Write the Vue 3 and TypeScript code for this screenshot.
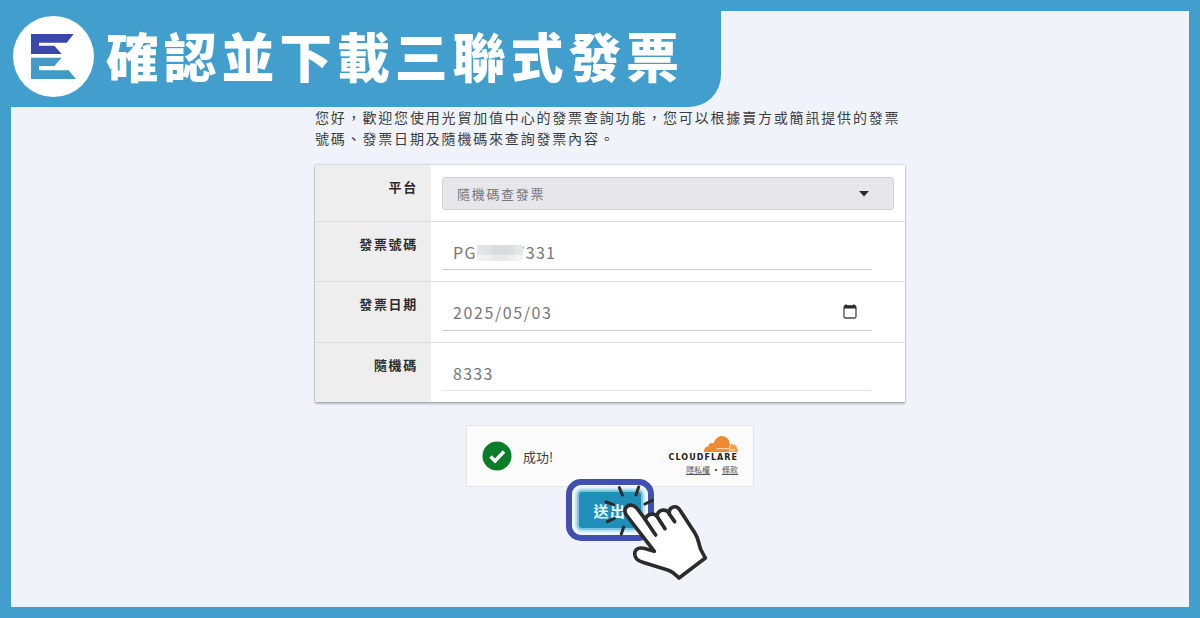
<script setup lang="ts">
import { ref } from 'vue'

const platform = ref('random-code')
const invoiceNumber = ref('PG        7331')
const invoiceDate = ref('2025/05/03')
const randomCode = ref('8333')

const maskTiles: string[] = [
  '#e2e4e6', '#dfe2e4', '#d9dde0', '#d8dcde', '#dddfe1', '#e6e8e8',
  '#f0f0f0', '#eeefef', '#e9eaeb', '#e6e8ea', '#efefef', '#f4f4f4',
]
</script>

<template>
  <div class="page">
    <header class="banner">
      <svg class="logo" viewBox="0 0 81 81" aria-hidden="true">
        <circle cx="40.5" cy="40.5" r="40.5" fill="#fff" />
        <path d="M18 18H60.7L53.7 26.8H26V29.8H41.3L48.7 38H18Z" fill="#3a47ab" />
        <path d="M18 41.7H48.7L41.3 50H26V54.3H55.7L63 63H18Z" fill="#3f9cc9" />
      </svg>
      <h1 class="title">確認並下載三聯式發票</h1>
    </header>

    <main class="content">
      <p class="intro">您好，歡迎您使用光貿加值中心的發票查詢功能，您可以根據賣方或簡訊提供的發票號碼、發票日期及隨機碼來查詢發票內容。</p>

      <form class="form" @submit.prevent>
        <div class="card">
          <div class="row">
            <label class="label" for="platform">平台</label>
            <div class="cell">
              <div class="select-wrap">
                <select id="platform" v-model="platform" class="select">
                  <option value="random-code">隨機碼查發票</option>
                </select>
                <svg class="caret" viewBox="0 0 10 6" aria-hidden="true"><path d="M0 0H10L5 5.5Z" fill="#2b2c30" /></svg>
              </div>
            </div>
          </div>
          <div class="row">
            <label class="label" for="number">發票號碼</label>
            <div class="cell">
              <div class="field">
                <input id="number" v-model="invoiceNumber" class="input" type="text" />
                <span class="mask" aria-hidden="true">
                  <i v-for="(color, i) in maskTiles" :key="i" :style="{ background: color }"></i>
                </span>
              </div>
            </div>
          </div>
          <div class="row">
            <label class="label" for="date">發票日期</label>
            <div class="cell">
              <div class="field">
                <input id="date" v-model="invoiceDate" class="input date" type="text" />
                <button class="picker" type="button" aria-label="發票日期">
                  <svg viewBox="0 0 14 15" aria-hidden="true">
                    <rect x="1" y="2" width="12" height="12" rx="1.5" fill="none" stroke="#4a4a4a" stroke-width="1.3" />
                    <path d="M1 1.6H13V4.6H1ZM2.3 0.4H4V2H2.3ZM10 0.4H11.7V2H10Z" fill="#2b2b2b" />
                  </svg>
                </button>
              </div>
            </div>
          </div>
          <div class="row">
            <label class="label" for="code">隨機碼</label>
            <div class="cell">
              <div class="field">
                <input id="code" v-model="randomCode" class="input light" type="text" />
              </div>
            </div>
          </div>
        </div>

        <div class="turnstile">
          <svg class="check" viewBox="0 0 30 30" aria-hidden="true">
            <circle cx="15" cy="15" r="14.5" fill="#0a7d28" />
            <path d="M8.500 15.500L13 20L22 10.500" fill="none" stroke="#fff" stroke-width="3.4" />
          </svg>
          <span class="success">成功!</span>
          <div class="brand">
            <svg class="cloud" viewBox="0 0 34 16" aria-hidden="true">
              <path d="M0 16C0 12 2 10.500 4.500 10.200C4.300 7.500 7.500 6.300 9.500 7.500C11 2.500 14.500 0 18 0C22 0 25 3 25.500 6.500L26 9L24.500 16Z" fill="#ee8b32" />
              <path d="M24.500 16L26.300 8C31 7.500 34 11 33.800 16Z" fill="#f0a04c" />
              <path d="M12 12.700H24C25.500 12.700 26.200 10 26.500 8M25 14H31" fill="none" stroke="#fff4e6" stroke-width=".8" />
            </svg>
            <strong class="wordmark">CLOUDFLARE</strong>
            <span class="links"><a href="#privacy">隱私權</a><b>•</b><a href="#terms">條款</a></span>
          </div>
        </div>

        <div class="submit-area">
          <div class="ring">
            <button class="submit" type="submit">送出</button>
          </div>
          <svg class="hand" viewBox="0 0 480 360" aria-hidden="true">
            <path
              d="M283 244L199 135C185 113 211 94 230 114L256 148C260 132 278 128 291 138C294 118 315 116 328 127C328 110 350 103 360 121L405 190C417 208 416 224 423 240L436 264L357 324C344 311 337 304 323 300L248 277C216 268 218 234 243 234C257 234 268 240 283 244Z"
              fill="#fff" stroke="#2b2b2b" stroke-width="11" stroke-linejoin="round" />
            <g fill="none" stroke="#2b2b2b" stroke-linecap="round">
              <path d="M254 146L287 195M290 137L315 176M325 128L344 155" stroke-width="11" />
              <path d="M178 53L187 75M236 51L228 75M255 102L277 91M138 96L161 104M142 155L163 145M191 171L184 192" stroke-width="9" />
            </g>
          </svg>
        </div>
      </form>
    </main>
  </div>
</template>

<style>
body {
  margin: 0;
}
</style>

<style scoped>
.page {
  box-sizing: border-box;
  min-height: 100vh;
  display: flex;
  flex-direction: column;
  border: 11px solid #429fcd;
  background: #f0f3f9;
  color: #3c3d40;
  font-family: "Noto Sans CJK TC", sans-serif;
}

.banner {
  align-self: flex-start;
  display: flex;
  align-items: center;
  gap: 12px;
  margin: -11px 0 0 -11px;
  padding: 16px 37px 10px 13px;
  border-radius: 0 0 32px 0;
  background: #429fcd;
}

.logo {
  width: 81px;
  height: 81px;
}

.title {
  margin: 0;
  padding-bottom: 4px;
  color: #fff;
  font-size: 53px;
  line-height: 74px;
  font-weight: 900;
  letter-spacing: 0.09em;
  white-space: nowrap;
}

.content {
  width: 590px;
  max-width: 100%;
  align-self: center;
  padding-left: 20px;
}

.intro {
  margin: 0 0 16px;
  font-size: 14px;
  line-height: 21px;
  letter-spacing: 0.13em;
}

.card {
  background: #fff;
  box-shadow: 0 0 2px rgba(0, 0, 0, 0.3), 0 2px 2px rgba(0, 0, 0, 0.22);
}

.row {
  display: grid;
  grid-template-columns: 116px 1fr;
}

.row + .row {
  border-top: 1px solid #dadde0;
}

.label {
  padding: 12px 13px 0 0;
  background: #eee;
  color: #2b2b2d;
  font-size: 13px;
  line-height: 20px;
  font-weight: 700;
  letter-spacing: 0.13em;
  text-align: right;
}

.cell {
  padding: 12px 11px 11px;
}

.select-wrap,
.field {
  position: relative;
}

.field {
  margin-right: 23px;
}

.select {
  display: block;
  width: 100%;
  height: 33px;
  padding: 0 14px;
  appearance: none;
  border: 1px solid #cfd2d5;
  border-radius: 3px;
  background: #e6e6eb;
  color: #74777b;
  font-family: inherit;
  font-size: 13px;
  letter-spacing: 0.13em;
}

.caret {
  position: absolute;
  top: 14px;
  right: 25px;
  width: 10px;
  height: 6px;
}

.input {
  display: block;
  box-sizing: border-box;
  width: 100%;
  height: 36px;
  padding: 0 11px;
  border: 0;
  border-bottom: 1px solid #cdcfd1;
  background: transparent;
  color: #74777b;
  font-family: inherit;
  font-size: 16px;
  letter-spacing: 0.08em;
}

.date {
  height: 37px;
  letter-spacing: 0.1em;
}

.light {
  border-bottom-color: #e2e3e5;
}

.mask {
  position: absolute;
  top: 11px;
  left: 35px;
  width: 46px;
  height: 16px;
  display: grid;
  grid-template-columns: repeat(6, 1fr);
  grid-template-rows: 10px 6px;
}

.picker {
  position: absolute;
  top: 10px;
  right: 14px;
  width: 14px;
  height: 15px;
  padding: 0;
  border: 0;
  background: none;
}

.picker svg {
  display: block;
}

.turnstile {
  box-sizing: border-box;
  display: flex;
  align-items: center;
  width: 288px;
  height: 62px;
  margin: 23px auto 0;
  padding: 0 15px;
  border: 1px solid #e3e4e6;
  background: #fbfbfb;
}

.check {
  width: 30px;
  height: 30px;
}

.success {
  margin-left: 11px;
  font-size: 13px;
}

.brand {
  display: flex;
  flex-direction: column;
  align-items: flex-end;
  margin-left: auto;
}

.cloud {
  width: 34px;
  height: 16px;
}

.wordmark {
  color: #222;
  font-family: "DejaVu Sans", sans-serif;
  font-size: 8px;
  line-height: 12px;
  font-weight: 700;
  letter-spacing: 0.13em;
}

.links {
  display: flex;
  gap: 2px;
  font-size: 8px;
  line-height: 12px;
}

.links a {
  color: #55565a;
}

.submit-area {
  position: relative;
  width: 88px;
  margin: -8px auto 0;
}

.ring {
  box-sizing: border-box;
  height: 62px;
  padding: 5px;
  border: 6px solid #4150b0;
  border-radius: 15px;
  background: #f5f9fc;
}

.submit {
  display: block;
  width: 100%;
  height: 100%;
  padding: 0;
  border: 2px solid #7fc4dc;
  border-radius: 5px;
  background: #1f8fba;
  box-shadow: 0 0 2px 2px #b5e0ef;
  color: #e4f5fb;
  font-family: inherit;
  font-size: 15px;
  font-weight: 700;
  letter-spacing: 0.1em;
}

.hand {
  position: absolute;
  top: -9px;
  left: -6px;
  width: 160px;
  height: 120px;
  pointer-events: none;
}
</style>
